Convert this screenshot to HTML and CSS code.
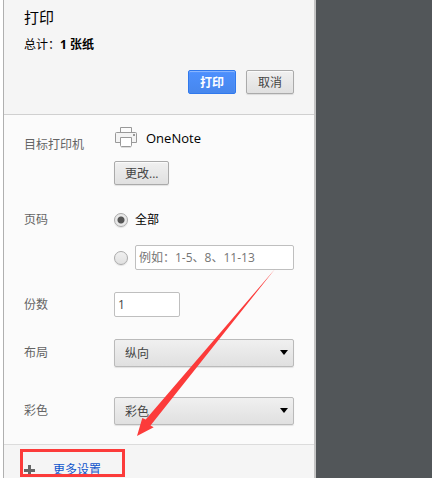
FILE: index.html
```html
<!DOCTYPE html>
<html lang="zh-CN">
<head>
<meta charset="utf-8">
<title>打印</title>
<link rel="stylesheet" href="styles.css">
</head>
<body>
<div class="page">
  <form class="sidebar">
    <header class="header">
      <h1 class="title">打印</h1>
      <p class="summary">总计：<b>1 张纸</b></p>
      <div class="actions">
        <button class="button primary" type="button">打印</button>
        <button class="button" type="button">取消</button>
      </div>
    </header>
    <div class="settings">
      <section class="row printer-row">
        <h2 class="label">目标打印机</h2>
        <div class="stack">
          <div class="printer">
            <svg class="printer-icon" width="24" height="22" viewBox="0 0 24 22" aria-hidden="true">
              <path d="M6.500 6.500V.5h11v6" fill="#fcfcfc" stroke="#999"/>
              <path d="M2.500 5.500h19q1 0 1 1v9h-21v-9q0-1 1-1z" fill="#f4f4f4" stroke="#999"/>
              <path d="M6.500 10.500h11v8q0 1-1 1h-9q-1 0-1-1z" fill="#fff" stroke="#999"/>
              <path d="M7 20.500h10" stroke="#ddd"/>
              <path d="M19 7h2v2h-2z" fill="#999"/>
            </svg>
            <span>OneNote</span>
          </div>
          <button class="button" type="button">更改...</button>
        </div>
      </section>
      <div class="row pages-row" role="radiogroup" aria-labelledby="pages-label">
        <span class="label" id="pages-label">页码</span>
        <div class="stack">
          <label class="choice"><input class="radio" type="radio" name="pages" checked>全部</label>
          <div class="choice range">
            <input class="radio" type="radio" name="pages" aria-label="自定义页码">
            <input class="field" type="text" placeholder="例如：1-5、8、11-13" aria-label="页码范围">
          </div>
        </div>
      </div>
      <div class="row copies-row">
        <label class="label" for="copies">份数</label>
        <input class="field copies" id="copies" type="text" value="1">
      </div>
      <div class="row">
        <label class="label" for="layout">布局</label>
        <div class="picker">
          <select class="select" id="layout"><option>纵向</option><option>横向</option></select>
        </div>
      </div>
      <div class="row">
        <label class="label" for="color">彩色</label>
        <div class="picker">
          <select class="select" id="color"><option>彩色</option><option>黑白</option></select>
        </div>
      </div>
    </div>
    <footer class="footer">
      <a class="more" href="#more">
        <svg width="11" height="11" viewBox="0 0 11 11" aria-hidden="true"><path d="M4 0h3v4h4v3H7v4H4V7H0V4h4z" fill="#666"/></svg>
        <span>更多设置</span>
      </a>
    </footer>
    <svg class="callout" width="312" height="478" viewBox="0 0 312 478" aria-hidden="true">
      <path d="M271 269 146.500 425.500 149.700 427.300 133 436 138.300 418 141.700 419.500z" fill="#fc3b3a"/>
      <path d="M17.500 450.500h102v25h-102z" fill="none" stroke="#fc3b3a" stroke-width="3"/>
    </svg>
  </form>
  <main class="preview"></main>
</div>
</body>
</html>
```
FILE: styles.css
```css
* {
  box-sizing: border-box;
}

body {
  margin: 0;
  overflow: hidden;
  background: #fff;
  color: #000;
  font: 12px/18px "Open Sans", "Noto Sans CJK SC", sans-serif;
}

.page {
  display: flex;
  height: 100vh;
  overflow: hidden;
  padding-left: 3px;
}

.sidebar {
  position: relative;
  flex: 0 0 313px;
  border: solid #b0b0b0;
  border-width: 0 2px 0 1px;
  border-right-color: #c4c4c4;
  background: #fbfbfb;
}

.preview {
  flex: 1;
  background: #525659;
}

.header {
  padding: 6px 20px 20px;
  border-bottom: 1px solid #d0d0d0;
  background: #f5f5f5;
}

.title {
  margin: 0;
  font-size: 15px;
  font-weight: 400;
  line-height: 22px;
}

.summary {
  margin: 8px 0 16px;
}

.actions {
  display: flex;
  justify-content: flex-end;
  gap: 10px;
}

.button {
  height: 24px;
  padding: 1px 10px 0;
  border: 1px solid #aaa;
  border-radius: 2px;
  background: linear-gradient(#f0f0f0, #e0e0e0);
  box-shadow: 0 1px 1px #0000001a, inset 0 1px 1px #ffffffc0;
  color: #444;
  font: inherit;
}

.actions .button {
  min-width: 48px;
}

.primary {
  border-color: #3079ed;
  background: linear-gradient(#4d90fe, #4787ed);
  box-shadow: inset 0 1px 1px #ffffff60;
  color: #fff;
  font-weight: 700;
}

.settings {
  display: grid;
  gap: 30px;
  padding: 12px 20px 19px;
}

.row {
  display: grid;
  grid-template-columns: 90px 1fr;
  align-items: center;
}

.printer-row,
.pages-row {
  align-items: start;
}

.printer-row .label {
  padding-top: 9px;
}

.label {
  margin: 0;
  color: #646464;
  font-size: 12px;
  font-weight: 400;
}

.stack {
  display: grid;
  justify-items: start;
  gap: 12px;
}

.printer {
  display: flex;
  align-items: center;
  gap: 8px;
  font-size: 13px;
}

.pages-row {
  margin-top: -4px;
  margin-bottom: -8px;
}

.pages-row .stack {
  gap: 16px;
}

.choice {
  display: flex;
  align-items: center;
  gap: 7px;
}

.range {
  width: 100%;
}

.radio {
  flex: none;
  width: 14px;
  height: 14px;
  margin: 0;
  appearance: none;
  border: 1px solid #aaa;
  border-radius: 50%;
  background: linear-gradient(#f0f0f0, #e0e0e0);
  box-shadow: 0 1px 1px #0000001a;
}

.radio:checked {
  background: radial-gradient(circle, #555 0 3px, #e8e8e8 4px);
}

.field {
  width: 100%;
  min-width: 0;
  height: 25px;
  padding: 0 3px;
  border: 1px solid #bfbfbf;
  border-radius: 2px;
  background: #fff;
  color: #444;
  font: inherit;
}

.field::placeholder {
  color: #757575;
}

.copies {
  width: 66px;
}

.copies-row {
  margin-bottom: -8px;
}

.picker {
  position: relative;
}

.picker::after {
  content: "";
  position: absolute;
  top: 11px;
  right: 6px;
  border: solid transparent;
  border-width: 5px 4px 0;
  border-top-color: #000;
  pointer-events: none;
}

.select {
  width: 100%;
  height: 28px;
  padding: 1px 10px 0;
  appearance: none;
  border: 1px solid #bababa;
  border-radius: 2px;
  background: linear-gradient(#f0f0f0, #e0e0e0);
  box-shadow: 0 1px 1px #0000001a;
  color: #444;
  font: inherit;
}

.footer {
  height: 100%;
  padding: 16px 20px;
  border-top: 1px solid #dcdcdc;
  background: #f5f5f5;
}

.more {
  display: flex;
  align-items: center;
  gap: 18px;
  color: #15c;
  text-decoration: none;
}

.callout {
  position: absolute;
  top: 0;
  left: 0;
  pointer-events: none;
}
```
